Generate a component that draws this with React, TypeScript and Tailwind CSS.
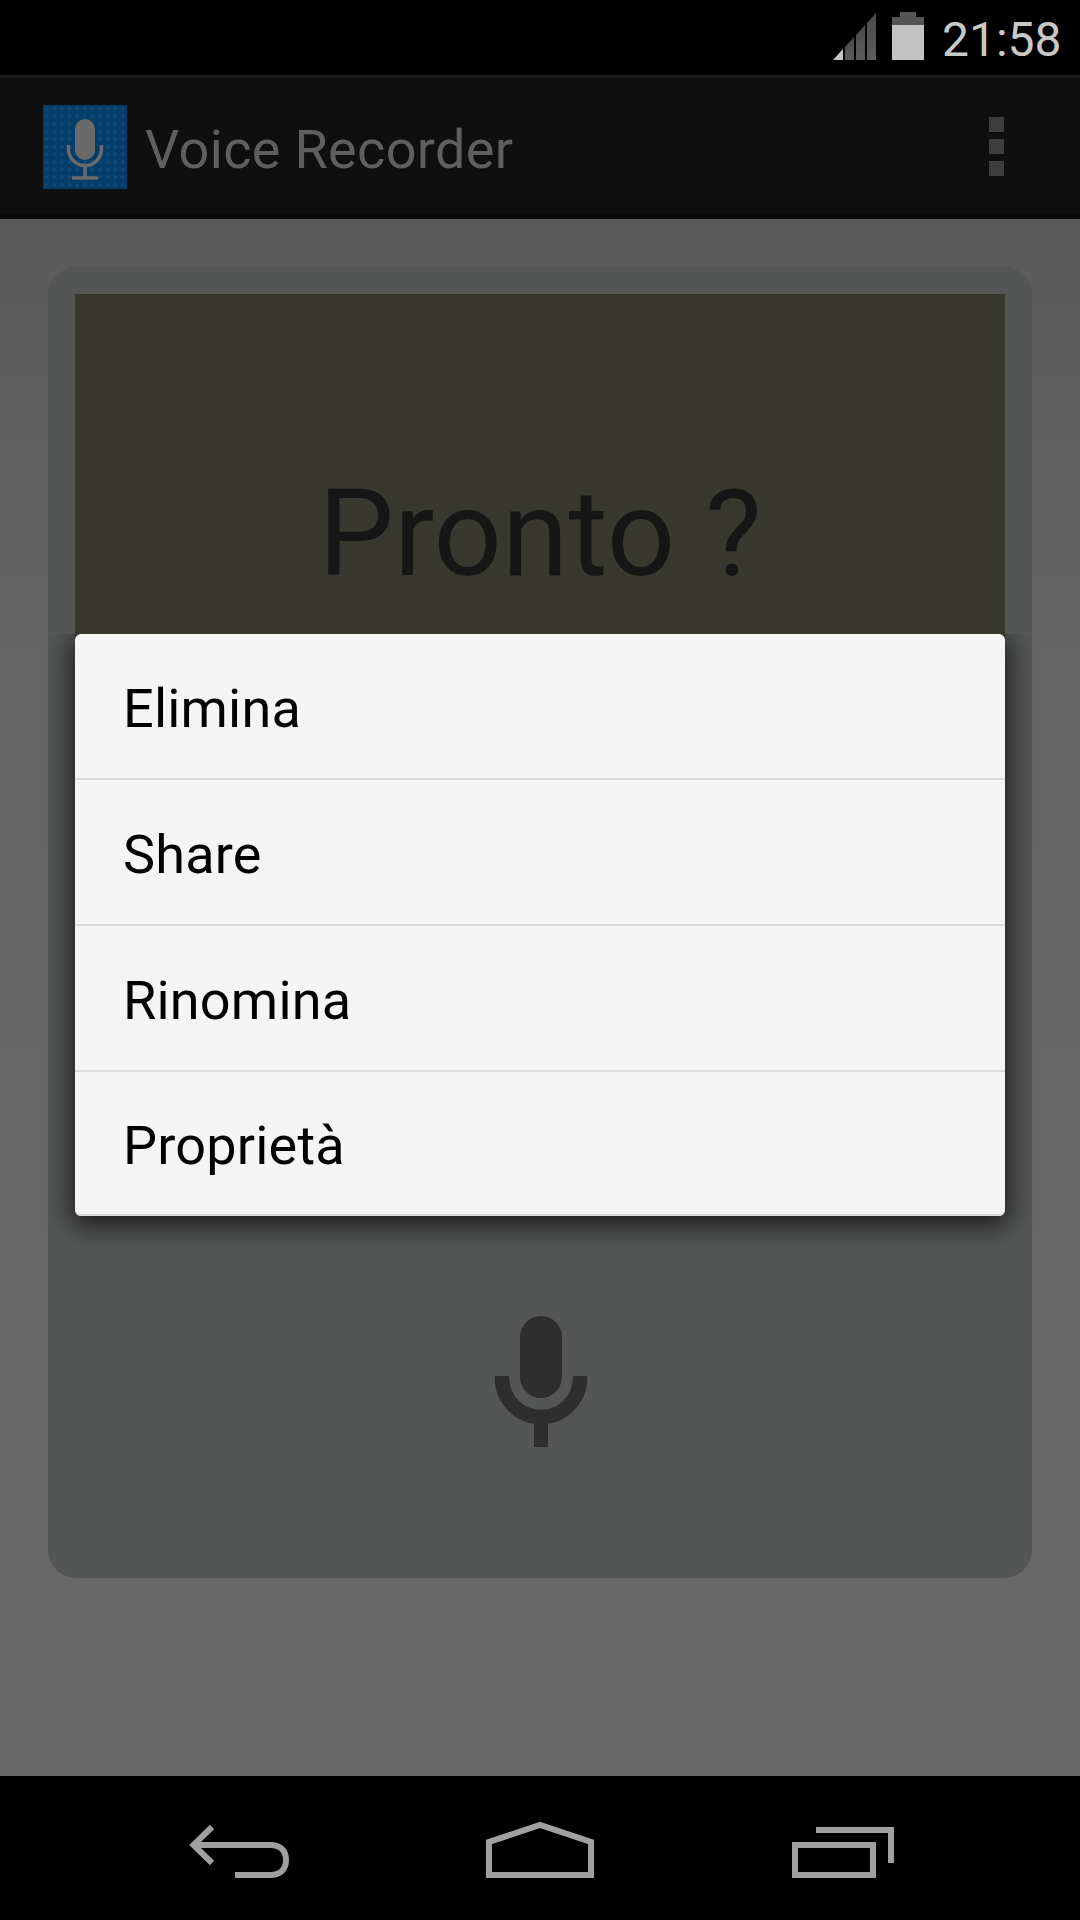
export default function App() {
  const items = ["Elimina", "Share", "Rinomina", "Proprietà"];
  return (
    <div className="relative flex h-[1920px] w-[1080px] flex-col overflow-hidden bg-black font-['Roboto',sans-serif]">
      {/* status bar */}
      <div className="relative flex h-[75px] shrink-0 items-start bg-black pl-[833px] pt-[12px]">
        <svg width="43" height="48" viewBox="0 0 43 48" className="shrink-0">
          <defs>
            <linearGradient id="sig" x1="0" y1="0" x2="0" y2="1">
              <stop offset="0" stopColor="#4a4a4a" />
              <stop offset="1" stopColor="#5c5c5c" />
            </linearGradient>
          </defs>
          <path d="M0 48 L10 37 V48 Z" fill="#c6c6c6" />
          <path d="M12 35 L21 25 V48 H12 Z" fill="url(#sig)" />
          <path d="M23 23 L32 13 V48 H23 Z" fill="url(#sig)" />
          <path d="M34 11 L43 1 V48 H34 Z" fill="url(#sig)" />
        </svg>
        <svg width="32" height="48" viewBox="0 0 32 48" className="ml-[16px] shrink-0">
          <path d="M8 0 H24 V5 H32 V13 H0 V5 H8 Z" fill="#555555" />
          <rect x="0" y="13" width="32" height="35" fill="#c2c2c2" />
        </svg>
        <span className="ml-[18px] mt-[8px] text-[48px] leading-[40px] font-normal text-[#c8c8c8]">21:58</span>
      </div>

      {/* action bar */}
      <div className="flex h-[144px] shrink-0 items-center border-t-[3px] border-b-[6px] border-t-[#1c1c1c] border-b-[#0a0a0a] bg-[#0f0f0f] pl-[43px] pr-[76px]">
        <svg width="84" height="84" viewBox="0 0 84 84" className="mt-[2px] shrink-0">
          <defs>
            <pattern id="dots" width="7.6" height="7.6" patternUnits="userSpaceOnUse">
              <rect width="7.6" height="7.6" fill="#033d69" />
              <rect x="2.2" y="2.2" width="3.2" height="3.2" fill="#134974" />
            </pattern>
          </defs>
          <rect width="84" height="84" fill="url(#dots)" />
          <rect x="32" y="14" width="20" height="41" rx="10" fill="#6a6a6a" />
          <path d="M25.5 40 V44 A16.5 16.5 0 0 0 58.5 44 V40" fill="none" stroke="#6a6a6a" strokeWidth="3.5" />
          <path d="M42 60 V72 M29 73 H55" fill="none" stroke="#6a6a6a" strokeWidth="3.5" />
        </svg>
        <span className="ml-[18px] mt-[8px] text-[54px] leading-none font-normal tracking-[0.35px] text-[#5f5f5f]">Voice Recorder</span>
        <div className="ml-auto mt-[2px] flex flex-col gap-[7px]">
          <div className="h-[15px] w-[15px] bg-[#3d3d3d]" />
          <div className="h-[15px] w-[15px] bg-[#3d3d3d]" />
          <div className="h-[15px] w-[15px] bg-[#3d3d3d]" />
        </div>
      </div>

      {/* content */}
      <div className="h-[1557px] shrink-0 bg-gradient-to-b from-[#5a5a5a] via-[#666666] via-30% to-[#686868] pb-[198px] pl-[48px] pr-[48px] pt-[48px]">
        <div className="flex h-[1311px] flex-col items-center rounded-[28px] bg-[#545655] px-[27px] pt-[27px]">
          <div className="flex h-[606px] w-full items-start justify-center bg-[#383830] pt-[170px]">
            <span className="text-[120px] leading-[140px] tracking-[0.1px] text-[#161616]">Pronto ?</span>
          </div>
          <svg width="96" height="132" viewBox="0 0 96 132" className="ml-[1px] mt-[416px] shrink-0">
            <rect x="27" y="0" width="42" height="82" rx="21" fill="#2e2e2e" />
            <path d="M9 60 V62 A39 39 0 0 0 87 62 V60" fill="none" stroke="#2e2e2e" strokeWidth="14.5" />
            <rect x="41" y="100" width="14" height="31" fill="#2e2e2e" />
          </svg>
        </div>
      </div>

      {/* nav bar */}
      <div className="relative flex h-[144px] shrink-0 items-start bg-black">
        <svg width="1080" height="144" viewBox="0 1776 1080 144" fill="none" stroke="#a0a0a0" strokeWidth="6">
          <path d="M212 1827 L193.5 1845 L212 1863" strokeWidth="6" />
          <path d="M195 1845 H270 C281 1845 286 1851 286 1860 C286 1869 281 1875 270 1875 H235" />
          <path d="M489 1875 V1842 L540 1825 L591 1842 V1875 Z" />
          <rect x="795" y="1845" width="78" height="30" />
          <path d="M816 1830 H891 V1863" />
        </svg>
      </div>

      {/* context menu */}
      <div className="absolute left-[75px] top-[634px] w-[930px] rounded-[6px] bg-[#f5f5f5] shadow-[0_6px_26px_4px_rgba(0,0,0,0.68)] [clip-path:inset(0_-40px_-40px_-40px)]">
        {items.map((t, i) => (
          <div key={t} className={i < 3 ? "flex h-[146px] items-center border-b-2 border-[#dcdcdc] pl-[48px] pt-[5px] text-[54px] leading-none tracking-[0.2px] text-black" : "flex h-[144px] items-center rounded-b-[6px] border-b-2 border-[#d8d8d8] pl-[48px] pt-[5px] text-[54px] leading-none tracking-[0.2px] text-black"}>
            {t}
          </div>
        ))}
      </div>
    </div>
  );
}
